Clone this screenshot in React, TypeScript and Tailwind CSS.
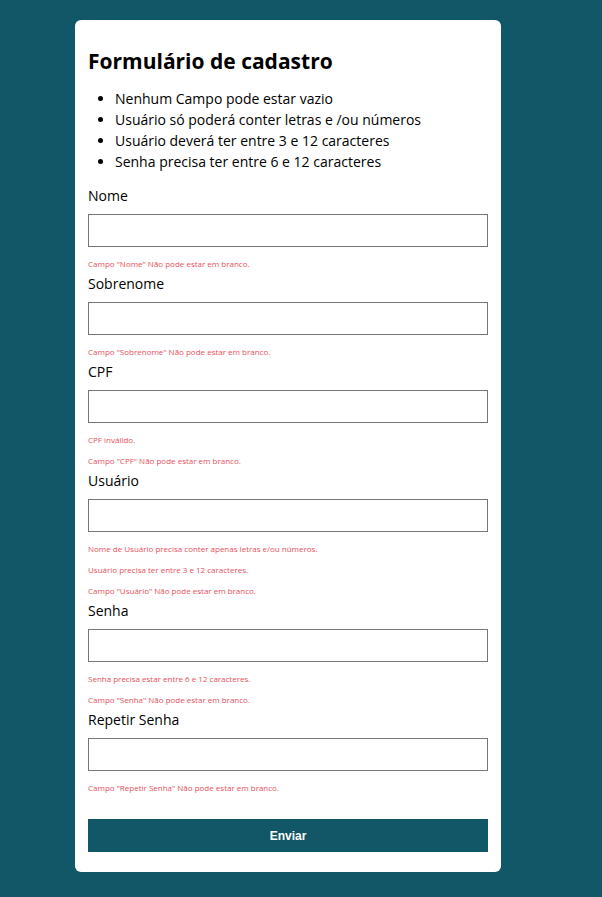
import React from "react";

type Field = { id: string; label: string; type: string; errors: string[] };

const rules = [
  "Nenhum Campo pode estar vazio",
  "Usuário só poderá conter letras e /ou números",
  "Usuário deverá ter entre 3 e 12 caracteres",
  "Senha precisa ter entre 6 e 12 caracteres",
];

const fields: Field[] = [
  { id: "nome", label: "Nome", type: "text", errors: ['Campo "Nome" Não pode estar em branco.'] },
  { id: "sobrenome", label: "Sobrenome", type: "text", errors: ['Campo "Sobrenome" Não pode estar em branco.'] },
  { id: "cpf", label: "CPF", type: "text", errors: ["CPF inválido.", 'Campo "CPF" Não pode estar em branco.'] },
  {
    id: "usuario",
    label: "Usuário",
    type: "text",
    errors: [
      "Nome de Usuário precisa conter apenas letras e/ou números.",
      "Usuário precisa ter entre 3 e 12 caracteres.",
      'Campo "Usuário" Não pode estar em branco.',
    ],
  },
  {
    id: "senha",
    label: "Senha",
    type: "password",
    errors: ["Senha precisa estar entre 6 e 12 caracteres.", 'Campo "Senha" Não pode estar em branco.'],
  },
  {
    id: "repetir-senha",
    label: "Repetir Senha",
    type: "password",
    errors: ['Campo "Repetir Senha" Não pode estar em branco.'],
  },
];

function FormField({ field }: { field: Field }) {
  return (
    <div>
      <label htmlFor={field.id} className="block leading-5">
        {field.label}
      </label>
      <input
        id={field.id}
        type={field.type}
        aria-describedby={`${field.id}-erros`}
        className="mt-2 mb-[6px] block h-[33px] w-full border border-[#767676] bg-white px-3"
      />
      <div id={`${field.id}-erros`} className="text-[8px] leading-[21px] text-[#e8505b]">
        {field.errors.map((error) => (
          <p key={error}>{error}</p>
        ))}
      </div>
    </div>
  );
}

export default function App() {
  return (
    <main className="min-h-screen bg-[#125767] py-5 pr-[101px] pl-[75px] font-['Open_Sans',sans-serif] text-[14px] text-black">
      <form
        noValidate
        onSubmit={(event) => event.preventDefault()}
        className="mx-auto max-w-[640px] rounded-[6px] bg-white px-[13px] pt-[25px] pb-5"
      >
        <h1 className="text-[21px] leading-8 font-bold">Formulário de cadastro</h1>
        <ul className="mt-[11px] mb-[14px] list-disc pl-[27px] leading-[21px]">
          {rules.map((rule) => (
            <li key={rule}>{rule}</li>
          ))}
        </ul>
        {fields.map((field) => (
          <FormField key={field.id} field={field} />
        ))}
        <button
          type="submit"
          className="mt-[21px] block h-[33px] w-full bg-[#125767] font-['Liberation_Sans',Arial,sans-serif] text-[12px] font-bold text-white"
        >
          Enviar
        </button>
      </form>
    </main>
  );
}
